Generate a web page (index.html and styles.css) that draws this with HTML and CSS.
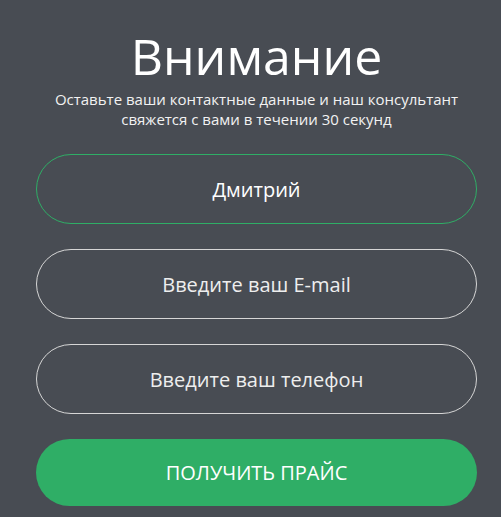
FILE: index.html
```html
<!DOCTYPE html>
<html lang="ru">
<head>
    <meta charset="UTF-8">
    <meta name="viewport" content="width=device-width, initial-scale=1.0">
    <title>Внимание</title>
    <link rel="stylesheet" href="styles.css">
</head>
<body>
    <div class="popup">
        <h1 class="popup_title">Внимание</h1>
        <p class="popup_text">Оставьте ваши контактные данные и наш консультант<br>свяжется с вами в течении 30 секунд</p>

        <form class="popup_form">
            <input type="text" class="field field_active" value="Дмитрий">
            <input type="email" class="field" placeholder="Введите ваш E-mail">
            <input type="tel" class="field" placeholder="Введите ваш телефон">
            <button type="button" class="send">Получить прайс</button>
        </form>
    </div>
</body>
</html>
```

FILE: styles.css
```css
body {
    margin: 0;
    background-color: #484c53;
    font-family: "Open Sans", "Noto Sans", sans-serif;
    color: #fff;
}

.popup {
    padding: 23px 24px 0 36px;
    text-align: center;
}

.popup_title {
    margin: 0;
    font-size: 50px;
    font-weight: 400;
    line-height: 66px;
}

.popup_text {
    margin: 0;
    font-size: 15px;
    line-height: 20px;
    color: #f2f2f2;
}

.popup_form {
    display: flex;
    flex-direction: column;
    gap: 25px;
    margin-top: 25px;
}

.field {
    box-sizing: border-box;
    width: 100%;
    height: 70px;
    border: 1px solid #d6d6d6;
    border-radius: 35px;
    background: transparent;
    font-family: inherit;
    font-size: 20px;
    color: #fff;
    text-align: center;
    outline: none;
}

.field::placeholder {
    color: #eeeeee;
    opacity: 1;
}

.field_active {
    border-color: #2fae66;
}

.send {
    height: 67px;
    border: none;
    border-radius: 34px;
    background-color: #2fae66;
    font-family: inherit;
    font-size: 20px;
    color: #fff;
    text-transform: uppercase;
    cursor: pointer;
}
```
